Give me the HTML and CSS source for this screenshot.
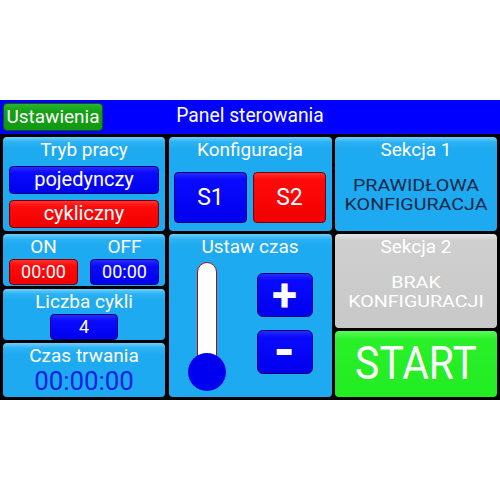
FILE: index.html
```html
<!DOCTYPE html>
<html lang="pl">
<head>
<meta charset="utf-8">
<title>Panel sterowania</title>
<link rel="stylesheet" href="styles.css">
</head>
<body>
<div class="screen">
  <header class="topbar">
    <div class="topbar-left"><button class="btn-settings">Ustawienia</button></div>
    <div class="title">Panel sterowania</div>
    <div></div>
  </header>
  <main class="grid">
    <section class="col">
      <div class="panel p-mode">
        <div class="label">Tryb pracy</div>
        <div class="mode-btns">
          <div class="btn blue wide">pojedynczy</div>
          <div class="btn red wide">cykliczny</div>
        </div>
      </div>
      <div class="panel p-onoff">
        <div class="onoff">
          <div class="onoff-item">
            <div class="label">ON</div>
            <div class="btn red time">00:00</div>
          </div>
          <div class="onoff-item">
            <div class="label">OFF</div>
            <div class="btn blue time">00:00</div>
          </div>
        </div>
      </div>
      <div class="panel p-cycles">
        <div class="label">Liczba cykli</div>
        <div class="btn blue count">4</div>
      </div>
      <div class="panel p-duration">
        <div class="label">Czas trwania</div>
        <div class="duration">00:00:00</div>
      </div>
    </section>
    <section class="col">
      <div class="panel p-config">
        <div class="label">Konfiguracja</div>
        <div class="config-btns">
          <div class="btn blue sbtn">S1</div>
          <div class="btn red sbtn">S2</div>
        </div>
      </div>
      <div class="panel p-settime">
        <div class="label">Ustaw czas</div>
        <div class="settime-body">
          <svg class="thermo" width="40" height="130" viewBox="0 0 40 130">
            <rect x="10.5" y="0.5" width="19" height="110" rx="9.5" ry="9.5" fill="#ffffff" stroke="#a01010" stroke-width="1"/>
            <circle cx="20" cy="110" r="19" fill="#0000f0"/>
          </svg>
          <div class="pm">
            <div class="btn blue pmbtn">+</div>
            <div class="btn blue pmbtn minus">-</div>
          </div>
        </div>
      </div>
    </section>
    <section class="col">
      <div class="panel p-sec">
        <div class="label">Sekcja 1</div>
        <div class="sec-text dark">PRAWIDŁOWA<br>KONFIGURACJA</div>
      </div>
      <div class="panel gray p-sec">
        <div class="label">Sekcja 2</div>
        <div class="sec-text">BRAK<br>KONFIGURACJI</div>
      </div>
      <div class="panel green p-start"><span class="start-text">START</span></div>
    </section>
  </main>
</div>
</body>
</html>
```

FILE: styles.css
```css
* { box-sizing: border-box; }
html, body { margin: 0; padding: 0; background: #ffffff; }
body {
  font-family: Roboto, "Liberation Sans", sans-serif;
  color: #ffffff;
}
.screen {
  margin-top: 100px;
  width: 500px;
  height: 300px;
  background: #000000;
  display: flex;
  flex-direction: column;
}
.topbar {
  height: 34px;
  background: #0000ff;
  display: grid;
  grid-template-columns: 1fr auto 1fr;
  align-items: center;
}
.topbar-left { padding-left: 3px; display: flex; align-items: center; }
.btn-settings {
  width: 100px;
  height: 28px;
  margin: 0;
  padding: 0;
  border: 1px solid #0b5a0b;
  border-radius: 4px;
  background: linear-gradient(#2cb42c 0, #14a014 8px, #129a12 100%);
  color: #ffffff;
  font-family: Roboto, "Liberation Sans", sans-serif;
  font-size: 19px;
  line-height: 26px;
}
.title {
  font-size: 19.3px;
  line-height: 24px;
  padding-bottom: 2px;
}
.grid {
  padding: 3px 3px 3px 3px;
  display: grid;
  grid-template-columns: 162px 163px 162px;
  column-gap: 3.5px;
  height: 266px;
}
.col {
  display: flex;
  flex-direction: column;
  gap: 3px;
}
.panel {
  border-radius: 4px;
  background: linear-gradient(#6fd0fb 0, #2cb2f4 5px, #1eaaf0 12px, #1eaaf0 100%);
  display: flex;
  flex-direction: column;
  align-items: center;
}
.panel.gray { background: linear-gradient(#e4e4e4 0, #cfcfcf 6px, #c8c8c8 100%); }
.panel.green { background: linear-gradient(#5cf85c 0, #2af02a 8px, #22ec22 100%); }
.label {
  font-size: 19px;
  line-height: 24px;
  padding-top: 1px;
}
.btn {
  border-radius: 4px;
  color: #ffffff;
  text-align: center;
}
.btn.blue {
  background: linear-gradient(#2a2aff 0, #0a0aff 6px, #0000ee 100%);
  border: 1px solid #00006e;
}
.btn.red {
  background: linear-gradient(#ff3030 0, #ff0a0a 6px, #f00000 100%);
  border: 1px solid #7a0000;
}
.p-mode { height: 94px; }
.mode-btns {
  margin-top: 4px;
  width: 150px;
  display: flex;
  flex-direction: column;
  gap: 6px;
}
.wide {
  height: 28px;
  font-size: 20px;
  line-height: 25px;
}
.p-onoff { height: 52px; }
.onoff {
  width: 150px;
  display: flex;
  justify-content: space-between;
}
.onoff-item {
  width: 69px;
  display: flex;
  flex-direction: column;
  align-items: center;
}
.time {
  width: 69px;
  height: 26px;
  font-size: 18px;
  line-height: 24px;
}
.p-cycles { height: 51px; }
.count {
  width: 68px;
  height: 26px;
  font-size: 18px;
  line-height: 24px;
}
.p-duration { height: 54px; }
.duration {
  color: #0a20e6;
  font-size: 25.8px;
  line-height: 26px;
}
.p-config { height: 94px; }
.config-btns {
  margin-top: 10px;
  display: flex;
  gap: 6px;
}
.sbtn {
  width: 73px;
  height: 51px;
  font-size: 23px;
  line-height: 49px;
}
.p-settime { height: 163px; }
.settime-body {
  align-self: stretch;
  display: flex;
  padding-left: 18px;
}
.thermo { margin-top: 3px; display: block; }
.pm {
  margin-left: 30px;
  margin-top: 14px;
  display: flex;
  flex-direction: column;
  gap: 13px;
}
.pmbtn {
  width: 56px;
  height: 44px;
  border-radius: 6px;
  font-size: 46px;
  font-weight: bold;
  line-height: 42px;
}
.minus { font-size: 54px; line-height: 38px; }
.p-sec { height: 94px; }
.sec-text {
  margin-top: 14px;
  font-size: 16.5px;
  line-height: 19px;
  text-align: center;
  transform: scaleX(1.19);
}
.sec-text.dark { color: #10284a; }
.p-start {
  flex: 1;
  justify-content: center;
  padding-bottom: 2px;
}
.start-text {
  display: block;
  font-size: 47px;
  line-height: 50px;
  transform: scaleX(0.87);
}
```
